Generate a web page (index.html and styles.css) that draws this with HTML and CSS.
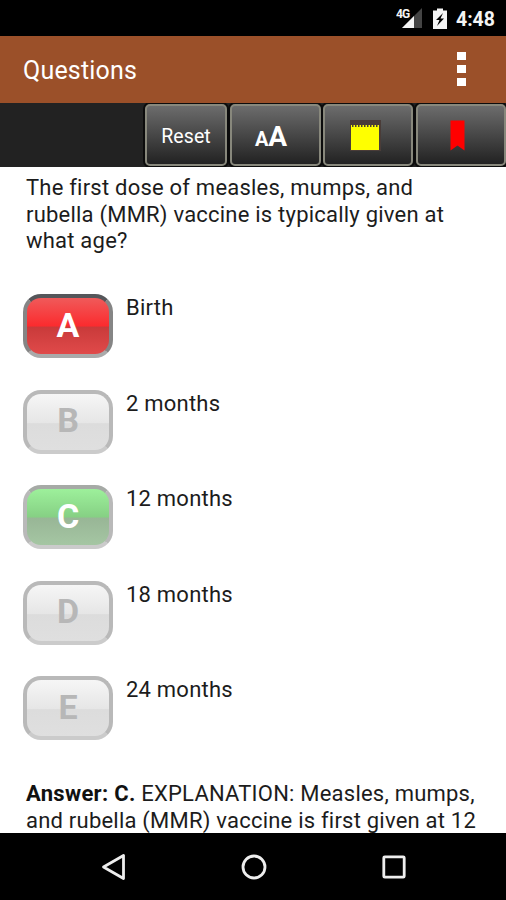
FILE: index.html
```
<!DOCTYPE html>
<html lang="en">

<head>
    <meta charset="UTF-8">
    <meta name="viewport" content="width=device-width, initial-scale=1">
    <title>Questions</title>
    <link rel="stylesheet" href="styles.css">
</head>

<body>
    <div class="status-bar">
        <svg class="signal" width="28" height="22" viewBox="0 0 28 22">
            <path d="M26 1V21H6Z" fill="#444" />
            <path d="M18 9V21H6Z" fill="#f4f4f4" />
            <text x="0" y="10.5" class="network">4G</text>
        </svg>
        <svg class="battery" width="14" height="21" viewBox="0 0 14 21">
            <path d="M0 2.5H4V0.5H10V2.5H14V21H0Z" fill="#f4f4f4" />
            <path d="M10 5L3 12H6.5L4 18L11 10.5H7.5Z" fill="#000" />
        </svg>
        <span class="clock">4:48</span>
    </div>

    <header class="header">
        <h1>Questions</h1>
        <div class="menu">
            <span></span>
            <span></span>
            <span></span>
        </div>
    </header>

    <div class="toolbar">
        <button class="tool reset">Reset</button>
        <button class="tool font-size"><span class="small-a">A</span><span class="big-a">A</span></button>
        <button class="tool">
            <svg class="note" width="31" height="31" viewBox="0 0 31 31">
                <rect x="0" y="0" width="31" height="31" fill="#4a3c38" />
                <rect x="1" y="5" width="28" height="25" fill="#ff0" />
                <path d="M2 5H29" stroke="#4a3c38" stroke-width="4" stroke-dasharray="1.5 1.5" />
            </svg>
        </button>
        <button class="tool">
            <svg class="bookmark" width="15" height="31" viewBox="0 0 15 31">
                <path d="M0.5 0.5H14.5V30.5L7.5 25.5L0.5 30.5Z" fill="#f00" />
            </svg>
        </button>
    </div>

    <main class="content">
        <p class="question">The first dose of measles, mumps, and<br>rubella (MMR) vaccine is typically given at<br>what age?</p>

        <ul class="answers">
            <li><button class="choice wrong">A</button><span>Birth</span></li>
            <li><button class="choice">B</button><span>2 months</span></li>
            <li><button class="choice correct">C</button><span>12 months</span></li>
            <li><button class="choice">D</button><span>18 months</span></li>
            <li><button class="choice">E</button><span>24 months</span></li>
        </ul>

        <p class="explanation"><b>Answer: C.</b> EXPLANATION: Measles, mumps,<br>and rubella (MMR) vaccine is first given at 12</p>
    </main>

    <nav class="nav-bar">
        <svg width="28" height="28" viewBox="0 0 28 28">
            <path d="M3.5 14L23.5 2.5V25.5Z" />
        </svg>
        <svg width="28" height="28" viewBox="0 0 28 28">
            <circle cx="14" cy="14" r="11" />
        </svg>
        <svg width="28" height="28" viewBox="0 0 28 28">
            <rect x="3.8" y="3.8" width="20.4" height="20.4" rx="1" />
        </svg>
    </nav>
</body>

</html>
```
FILE: styles.css
```
* {
    margin: 0;
    padding: 0;
    box-sizing: border-box;
}

body {
    font-family: Roboto, sans-serif;
    width: 100%;
    height: 900px;
    display: flex;
    flex-direction: column;
    background-color: #fff;
    color: #1c1c1c;
    overflow: hidden;
}

/* Status bar */
.status-bar {
    flex: none;
    height: 36px;
    padding-right: 11px;
    display: flex;
    justify-content: flex-end;
    align-items: center;
    background-color: #000;
    color: #f4f4f4;
}

.signal {
    margin-right: 9px;
}

.network {
    font-size: 12px;
    font-weight: 700;
    fill: #f4f4f4;
    stroke: #000;
    stroke-width: 2px;
    paint-order: stroke;
    letter-spacing: -1px;
}

.battery {
    margin-right: 9px;
}

.clock {
    padding-top: 2px;
    font-size: 19.5px;
    font-weight: 700;
}

/* Header */
.header {
    flex: none;
    height: 67px;
    padding: 2px 40px 0 23px;
    display: flex;
    justify-content: space-between;
    align-items: center;
    background-color: #9b5029;
    color: #fff;
}

.header h1 {
    font-size: 25px;
    font-weight: 400;
    letter-spacing: 0.2px;
}

.menu {
    margin-top: -3px;
    display: flex;
    flex-direction: column;
    gap: 5px;
}

.menu span {
    width: 9px;
    height: 8px;
    background-color: #fff;
}

/* Toolbar */
.toolbar {
    flex: none;
    height: 64px;
    padding: 1px 0 0 145px;
    display: grid;
    grid-template-columns: 82px 91px 90px 90px;
    column-gap: 2.5px;
    background-color: #222;
    overflow: hidden;
}

.tool {
    height: 62px;
    display: flex;
    justify-content: center;
    align-items: center;
    border: 2px solid #88887c;
    border-radius: 5px;
    background: linear-gradient(#6c6c6c, #222);
    box-shadow: 0 0 0 2px #0c0c0c;
    color: #fff;
    font-family: inherit;
}

.reset {
    font-size: 19.5px;
    letter-spacing: 0.1px;
    padding-top: 2px;
}

.font-size {
    align-items: baseline;
    padding-top: 14px;
    padding-right: 8px;
    font-weight: 700;
}

.small-a {
    font-size: 20px;
}

.big-a {
    font-size: 28px;
}

.note {
    margin-top: 1px;
    margin-right: 6px;
}

.bookmark {
    margin-top: 1px;
    margin-right: 6px;
}

/* Question and answers */
.content {
    flex: 1;
    min-height: 0;
    overflow: hidden;
    padding: 8px 0 0 26px;
    font-size: 22px;
    line-height: 26.7px;
    letter-spacing: 0.22px;
    white-space: nowrap;
}

.answers {
    list-style: none;
    margin: 39px 0 0 -3px;
}

.answers li {
    height: 95.6px;
    display: flex;
    align-items: flex-start;
    gap: 13px;
}

.answers span {
    padding-top: 1px;
}

.choice {
    width: 90px;
    height: 64px;
    border: 4px solid #b9b9b9;
    border-bottom-color: #cbcbcb;
    border-radius: 18px;
    background: linear-gradient(#f6f6f6, #e6e6e6 51%, #dcdcdc 53%, #dfdfdf);
    color: #b7b7b7;
    font-family: inherit;
    font-size: 34px;
    font-weight: 700;
    padding-bottom: 3px;
}

.wrong {
    border-color: #55565a #858585 #aaa;
    background: linear-gradient(#f05a5a, #fb2b2e 50%, #c93a3a 52%, #e04a4a);
    color: #fff;
}

.correct {
    border-color: #a6aaa6 #b9b9b9 #cbcbcb;
    background: linear-gradient(#9df09b, #86d084 50%, #98b696 52%, #a5c6a3);
    color: #fff;
}

.explanation {
    margin-top: 9px;
}

.explanation b {
    color: #111;
    letter-spacing: 0.3px;
}

/* Android navigation */
.nav-bar {
    flex: none;
    height: 67px;
    display: flex;
    justify-content: center;
    align-items: center;
    gap: 112px;
    padding-left: 1px;
    background-color: #000;
}

.nav-bar svg {
    fill: none;
    stroke: #eee;
    stroke-width: 2.8;
    stroke-linejoin: round;
}
```
